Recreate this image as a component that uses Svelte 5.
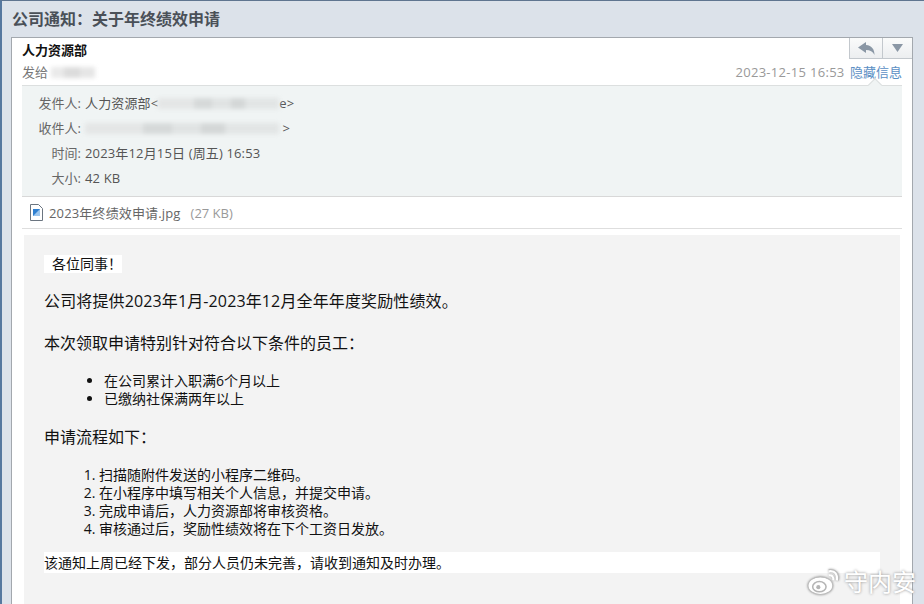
<script>
  const details = [
    { label: '发件人:', value: '人力资源部<', blur: 121, tail: 'e>' },
    { label: '收件人:', value: '', blur: 194, tail: ' >' },
    { label: '时间:', value: '2023年12月15日 (周五) 16:53' },
    { label: '大小:', value: '42 KB' }
  ];
  const bullets = ['在公司累计入职满6个月以上', '已缴纳社保满两年以上'];
  const steps = [
    '扫描随附件发送的小程序二维码。',
    '在小程序中填写相关个人信息，并提交申请。',
    '完成申请后，人力资源部将审核资格。',
    '审核通过后，奖励性绩效将在下个工资日发放。'
  ];
</script>

<div class="page">
  <h1 class="subject">公司通知：关于年终绩效申请</h1>

  <div class="card">
    <div class="actions">
      <button class="act reply" type="button" aria-label="回复">
        <svg width="17" height="13" viewBox="0 0 17 13"><path d="M8 0 L0 5.5 L8 11 V8 C12 8 15 9.5 16.5 13 C16.5 7.5 14 3.5 8 3 Z" fill="#8a97a5" /></svg>
      </button>
      <button class="act more" type="button" aria-label="更多">
        <svg width="11" height="8" viewBox="0 0 11 8"><path d="M0 0 H11 L5.5 8 Z" fill="#8a97a5" /></svg>
      </button>
    </div>

    <div class="head">
      <div class="sender">人力资源部</div>
      <div class="meta">
        <span class="to">发给 <i class="smear to-smear"></i></span>
        <span class="when"><span class="stamp">2023-12-15 16:53</span> <a href="#top" class="toggle">隐藏信息</a></span>
      </div>
      <i class="notch"></i>
    </div>

    <div class="details">
      {#each details as d}
        <div class="row">
          <span class="label">{d.label}</span>
          <span class="value">{d.value}{#if d.blur}<i class="smear" style="width: {d.blur}px"></i>{d.tail}{/if}</span>
        </div>
      {/each}
    </div>

    <div class="attach">
      <svg width="13" height="17" viewBox="0 0 13 17">
        <path d="M0.5 0.5 H8.5 L12.5 4.5 V16.5 H0.5 Z" fill="#fff" stroke="#6b7580" />
        <rect x="3" y="5" width="7" height="7" fill="#2f7fd0" />
        <path d="M3 12 L10 5 V12 Z" fill="#9cc6ee" />
      </svg>
      <span class="file">2023年终绩效申请.jpg</span>
      <span class="size">(27 KB)</span>
    </div>

    <div class="body">
      <p class="greet"><span>各位同事！</span></p>
      <p class="big intro">公司将提供2023年1月-2023年12月全年年度奖励性绩效。</p>
      <p class="big cond">本次领取申请特别针对符合以下条件的员工：</p>
      <ul>
        {#each bullets as b}
          <li>{b}</li>
        {/each}
      </ul>
      <p class="big flow">申请流程如下：</p>
      <ol>
        {#each steps as s}
          <li>{s}</li>
        {/each}
      </ol>
      <p class="note">该通知上周已经下发，部分人员仍未完善，请收到通知及时办理。</p>
    </div>
  </div>

  <div class="mark">
    <svg width="34" height="30" viewBox="0 0 33 29">
      <ellipse cx="13" cy="19" rx="12" ry="8.5" fill="#fff" stroke="#bdbdbd" />
      <ellipse cx="12" cy="20" rx="6.5" ry="5" fill="none" stroke="#b5b5b5" stroke-width="1.5" />
      <circle cx="11" cy="20.5" r="2" fill="#b5b5b5" />
      <path d="M21 5 C27 4 30 8 29 14 M21 9 C24 8.5 26 10 25.5 14" fill="none" stroke="#fff" stroke-width="2" />
      <path d="M21 3.5 C28 2.5 32 7 30.5 14" fill="none" stroke="#bdbdbd" />
    </svg>
    <span>守内安</span>
  </div>
</div>

<style>
  :global(body) {
    margin: 0;
    overflow: hidden;
  }

  .page {
    position: relative;
    width: 924px;
    height: 604px;
    box-sizing: border-box;
    overflow: hidden;
    background: #dce2ea;
    border-top: 1px solid #5f7590;
    border-left: 2px solid #56789f;
    padding: 0 11px 0 9px;
    font-family: "Open Sans", "Noto Sans CJK SC", sans-serif;
    font-size: 13px;
    color: #333;
  }

  .subject {
    margin: 0;
    height: 36px;
    line-height: 36px;
    padding-left: 1px;
    font-size: 16px;
    font-weight: 700;
    color: #4a5058;
  }

  .card {
    position: relative;
    height: 580px;
    box-sizing: border-box;
    background: #fff;
    border: 1px solid #a3a8ae;
    border-bottom: 0;
    padding: 0 10px;
  }

  .actions {
    position: absolute;
    top: 0;
    right: 0;
    display: flex;
    border-left: 1px solid #c3c8cd;
    border-bottom: 1px solid #c3c8cd;
    background: linear-gradient(#fafbfb, #eceef0);
  }

  .act {
    display: flex;
    align-items: center;
    justify-content: center;
    height: 20px;
    padding: 0;
    border: 0;
    background: none;
  }

  .reply {
    width: 33px;
    border-right: 1px solid #c3c8cd;
  }

  .more {
    width: 29px;
  }

  .head {
    position: relative;
    height: 47px;
    box-sizing: border-box;
    padding-top: 3px;
  }

  .sender {
    height: 21px;
    line-height: 19px;
    font-weight: 700;
    color: #111;
  }

  .meta {
    display: flex;
    justify-content: space-between;
    line-height: 20px;
    color: #777;
  }

  .when {
    color: #999;
  }

  .stamp {
    letter-spacing: 0.3px;
  }

  .toggle {
    margin-left: 2px;
    color: #5b8fc4;
    text-decoration: none;
  }

  .notch {
    position: absolute;
    right: 22px;
    bottom: -5px;
    width: 9px;
    height: 9px;
    background: #f0f4f4;
    border-top: 1px solid #dcdfdf;
    border-left: 1px solid #dcdfdf;
    transform: rotate(45deg);
    z-index: 1;
  }

  .smear {
    display: inline-block;
    height: 11px;
    vertical-align: -1px;
    background: linear-gradient(90deg, #e4e6e6 0 30%, #d6d9d9 30% 45%, #e0e3e3 45% 60%, #d4d7d7 60% 72%, #e2e5e5 72% 100%);
    filter: blur(2px);
  }

  .to-smear {
    width: 44px;
    background: linear-gradient(90deg, #eaeaea 0 30%, #dcdcdc 30% 65%, #e6e6e6 65% 100%);
  }

  .details {
    height: 112px;
    box-sizing: border-box;
    padding-top: 5px;
    background: #f0f4f4;
    border-top: 1px solid #dcdfdf;
    border-bottom: 1px solid #d8d8d8;
  }

  .row {
    display: flex;
    height: 25px;
    line-height: 25px;
    color: #555;
  }

  .value {
    letter-spacing: 0.15px;
  }

  .label {
    width: 59px;
    margin-right: 4px;
    text-align: right;
    color: #666;
  }

  .attach {
    display: flex;
    align-items: center;
    gap: 6px;
    height: 32px;
    box-sizing: border-box;
    padding-left: 8px;
    border-bottom: 1px solid #dedede;
    color: #666;
  }

  .file {
    letter-spacing: 0.15px;
  }

  .size {
    margin-left: 4px;
    color: #999;
  }

  .body {
    margin: 6px 2px 0;
    height: 369px;
    box-sizing: border-box;
    padding: 20px 20px 0;
    background: #f3f3f3;
    color: #111;
    font-size: 14px;
  }

  .body p {
    margin: 0;
  }

  .greet {
    height: 18px;
  }

  .greet span {
    display: block;
    width: 70px;
    height: 18px;
    line-height: 18px;
    padding-left: 8px;
    background: #fff;
  }

  .big {
    font-size: 16px;
    line-height: 22px;
  }

  .intro {
    margin-top: 17px !important;
    letter-spacing: 0.13px;
  }

  .cond {
    margin-top: 20px !important;
  }

  .flow {
    margin-top: 18px !important;
  }

  ul,
  ol {
    margin: 0;
    padding-left: 60px;
    line-height: 18px;
  }

  ul {
    margin-top: 18px;
  }

  ol {
    margin-top: 18px;
    padding-left: 55px;
  }

  .note {
    margin-top: 14px !important;
    width: 836px;
    height: 21px;
    line-height: 21px;
    background: #fff;
  }

  .mark {
    position: absolute;
    left: 805px;
    top: 565px;
    display: flex;
    align-items: center;
    gap: 3px;
    color: #fff;
    font-size: 24px;
    line-height: 29px;
    text-shadow: 0 0 3px #888;
  }

  .mark svg {
    filter: drop-shadow(0 0 1px #999);
  }
</style>
